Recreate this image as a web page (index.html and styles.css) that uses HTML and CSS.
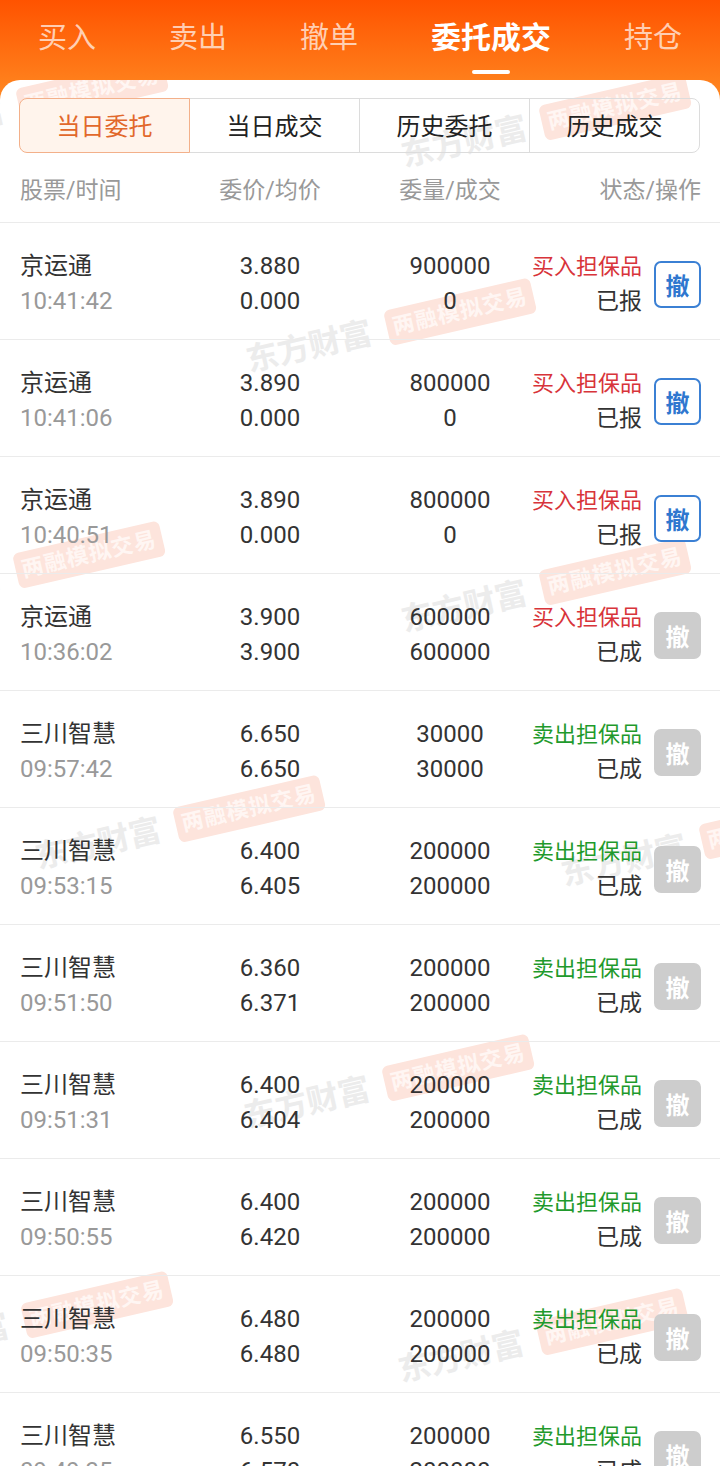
FILE: index.html
```html
<!DOCTYPE html>
<html lang="zh-CN">
<head>
<meta charset="UTF-8">
<meta name="viewport" content="width=device-width, initial-scale=1.0">
<title>委托成交</title>
<link rel="stylesheet" href="styles.css">
</head>
<body>
  <div class="topbar">
    <div class="tab">买入</div>
    <div class="tab">卖出</div>
    <div class="tab">撤单</div>
    <div class="tab active">委托成交<span class="tab-bar"></span></div>
    <div class="tab">持仓</div>
  </div>

  <div class="card">
    <!-- 水印 -->
    <div class="wm-layer">
      <div class="wm wm1"><span class="wm-brand">东方财富</span><span class="wm-tag">两融模拟交易</span></div>
      <div class="wm wm2"><span class="wm-brand">东方财富</span><span class="wm-tag">两融模拟交易</span></div>
      <div class="wm wm3"><span class="wm-brand">东方财富</span><span class="wm-tag">两融模拟交易</span></div>
      <div class="wm wm4"><span class="wm-brand">东方财富</span><span class="wm-tag">两融模拟交易</span></div>
      <div class="wm wm5"><span class="wm-brand">东方财富</span><span class="wm-tag">两融模拟交易</span></div>
      <div class="wm wm6"><span class="wm-brand">东方财富</span><span class="wm-tag">两融模拟交易</span></div>
      <div class="wm wm7"><span class="wm-brand">东方财富</span><span class="wm-tag">两融模拟交易</span></div>
      <div class="wm wm8"><span class="wm-brand">东方财富</span><span class="wm-tag">两融模拟交易</span></div>
      <div class="wm wm9"><span class="wm-brand">东方财富</span><span class="wm-tag">两融模拟交易</span></div>
      <div class="wm wm10"><span class="wm-brand">东方财富</span><span class="wm-tag">两融模拟交易</span></div>
    </div>

    <div class="seg">
      <div class="seg-item active">当日委托</div>
      <div class="seg-item">当日成交</div>
      <div class="seg-item">历史委托</div>
      <div class="seg-item">历史成交</div>
    </div>

    <div class="list-head">
      <div>股票/时间</div>
      <div class="c">委价/均价</div>
      <div class="c">委量/成交</div>
      <div class="r span2">状态/操作</div>
    </div>

    <div id="orders"></div>
  </div>

<script>
  const orders = [
    ['京运通', '10:41:42', '3.880', '0.000', '900000', '0', 'buy', '已报', true],
    ['京运通', '10:41:06', '3.890', '0.000', '800000', '0', 'buy', '已报', true],
    ['京运通', '10:40:51', '3.890', '0.000', '800000', '0', 'buy', '已报', true],
    ['京运通', '10:36:02', '3.900', '3.900', '600000', '600000', 'buy', '已成', false],
    ['三川智慧', '09:57:42', '6.650', '6.650', '30000', '30000', 'sell', '已成', false],
    ['三川智慧', '09:53:15', '6.400', '6.405', '200000', '200000', 'sell', '已成', false],
    ['三川智慧', '09:51:50', '6.360', '6.371', '200000', '200000', 'sell', '已成', false],
    ['三川智慧', '09:51:31', '6.400', '6.404', '200000', '200000', 'sell', '已成', false],
    ['三川智慧', '09:50:55', '6.400', '6.420', '200000', '200000', 'sell', '已成', false],
    ['三川智慧', '09:50:35', '6.480', '6.480', '200000', '200000', 'sell', '已成', false],
    ['三川智慧', '09:49:35', '6.550', '6.570', '200000', '200000', 'sell', '已成', false]
  ];

  const list = document.getElementById('orders');
  orders.forEach(o => {
    const row = document.createElement('div');
    row.className = 'row';
    const side = o[6] === 'buy' ? '买入担保品' : '卖出担保品';
    row.innerHTML =
      '<div><span class="line name">' + o[0] + '</span><span class="line time">' + o[1] + '</span></div>' +
      '<div class="c"><span class="line">' + o[2] + '</span><span class="line">' + o[3] + '</span></div>' +
      '<div class="c"><span class="line">' + o[4] + '</span><span class="line">' + o[5] + '</span></div>' +
      '<div class="r"><span class="line side ' + o[6] + '">' + side + '</span><span class="line state">' + o[7] + '</span></div>' +
      '<div class="cancel' + (o[8] ? '' : ' off') + '">撤</div>';
    list.appendChild(row);
  });
</script>
</body>
</html>
```

FILE: styles.css
```css
body {
  margin: 0;
  font-family: Roboto, "Noto Sans CJK SC", sans-serif;
  background: linear-gradient(180deg, #ff5300 0, #ff8b23 104px, #fff 104px);
  color: #333;
}
.topbar {
  height: 80px;
  display: flex;
  gap: 73px;
  padding-left: 38px;
  box-sizing: border-box;
}
.tab {
  display: flex;
  flex-direction: column;
  align-items: center;
  padding-top: 18px;
  font-size: 29px;
  line-height: 40px;
  color: rgba(255,255,255,0.7);
}
.tab.active {
  color: #fff;
  font-weight: 700;
  font-size: 30px;
}
.tab-bar {
  width: 38px;
  height: 4px;
  border-radius: 2px;
  background: #fff;
  margin-top: 12px;
}
.card {
  position: relative;
  overflow: hidden;
  background: #fff;
  border-radius: 20px 20px 0 0;
  min-height: 1390px;
}

/* watermark */
.wm-layer {
  position: absolute;
  inset: 0;
  z-index: 0;
  pointer-events: none;
}
.wm {
  position: absolute;
  display: flex;
  align-items: center;
  gap: 14px;
  transform: rotate(-13deg);
}
.wm-brand {
  width: 130px;
  font-size: 32px;
  font-weight: 700;
  line-height: 36px;
  color: #ececec;
  white-space: nowrap;
}
.wm-tag {
  width: 150px;
  height: 36px;
  line-height: 36px;
  text-align: center;
  border-radius: 6px;
  background: #fde4dc;
  color: #fff6f3;
  font-size: 22px;
  font-weight: 700;
  letter-spacing: 1px;
  white-space: nowrap;
}
.wm1 { left: -125px; top: 8px; }
.wm2 { left: 398px; top: 25px; }
.wm3 { left: 243px; top: 230px; }
.wm4 { left: -128px; top: 473px; }
.wm5 { left: 398px; top: 490px; }
.wm6 { left: 32px; top: 727px; }
.wm7 { left: 558px; top: 744px; }
.wm8 { left: 241px; top: 986px; }
.wm9 { left: -120px; top: 1223px; }
.wm10 { left: 395px; top: 1240px; }

/* tabs */
.seg {
  position: relative;
  z-index: 1;
  display: flex;
  margin: 18px 20px 0 19px;
}
.seg-item {
  flex: 1;
  height: 55px;
  box-sizing: border-box;
  border: 1px solid #dcdcdc;
  margin-left: -1px;
  padding-top: 3px;
  text-align: center;
  line-height: 50px;
  font-size: 24px;
  color: #222;
}
.seg-item:first-child {
  margin-left: 0;
  border-radius: 8px 0 0 8px;
}
.seg-item:last-child {
  border-radius: 0 8px 8px 0;
}
.seg-item.active {
  position: relative;
  z-index: 1;
  border-color: #f3b08a;
  background: #fff4ec;
  color: #e2682b;
}

/* list */
.list-head, .row {
  position: relative;
  z-index: 1;
  display: grid;
  grid-template-columns: 150px 200px 160px 112px 59px;
  border-bottom: 1px solid #ebebeb;
}
.list-head {
  padding: 21px 19px 14px 20px;
  line-height: 34px;
  font-size: 23px;
  color: #999;
}
.row {
  padding: 26px 19px 20px 20px;
  align-items: center;
}
.c { text-align: center; }
.r { text-align: right; }
.span2 { grid-column: span 2; }
.line {
  display: block;
  line-height: 35px;
  font-size: 24px;
  color: #333;
  white-space: nowrap;
}
.time { color: #999; }
.side { font-size: 22px; }
.side.buy { color: #d8343a; }
.side.sell { color: #1f9a2c; }
.state { font-size: 23px; }
.cancel {
  justify-self: end;
  width: 47px;
  height: 47px;
  box-sizing: border-box;
  border: 2px solid #3b80d4;
  border-radius: 7px;
  background: #fff;
  color: #2f77cf;
  font-size: 24px;
  font-weight: 700;
  display: flex;
  align-items: center;
  justify-content: center;
}
.cancel.off {
  background: #cdcdcd;
  border-color: #cdcdcd;
  color: #fff;
}
```
